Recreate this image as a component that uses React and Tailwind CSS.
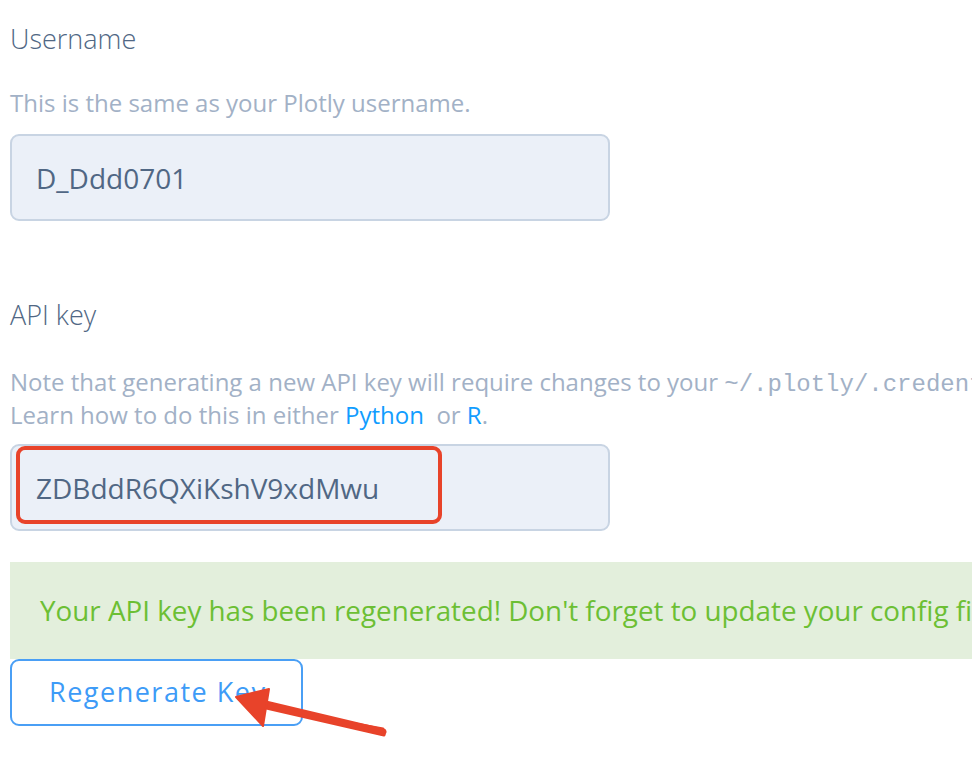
import React from 'react';

export default function App(){
  return (
    <div className="w-[972px] h-[768px] overflow-hidden bg-white relative" style={{ fontFamily: '"Open Sans", sans-serif' }}>
      <div className="w-[1400px] pl-[10px] pt-[21px]">
        <div className="text-[27px] leading-[36px] font-light text-[#506784]">Username</div>
        <div className="mt-[30px] text-[24px] leading-[32px] text-[#a2b1c6]">This is the same as your Plotly username.</div>
        <Field value="D_Ddd0701" className="mt-[15px]" />

        <div className="mt-[76px] text-[27px] leading-[36px] font-light text-[#506784]">API key</div>
        <div className="mt-[32px] text-[24px] leading-[33px] text-[#a2b1c6] whitespace-nowrap">
          <div className="h-[33px]">
            Note that generating a new API key will require changes to your{' '}
            <code className="text-[24px] leading-none" style={{ fontFamily: '"Liberation Mono", monospace' }}>~/.plotly/.credentials</code> file.
          </div>
          <div className="h-[33px]">
            Learn how to do this in either <a className="text-[#119dff]">Python</a>&nbsp; or <a className="text-[#119dff]">R</a>.
          </div>
        </div>
        <div className="relative mt-[13px] w-[600px]">
          <Field value="ZDBddR6QXiKshV9xdMwu" />
          {/* annotation box */}
          <div className="absolute left-[6px] top-[2px] w-[426px] h-[78px] border-[4px] border-[#e8432a] rounded-[9px]" />
        </div>

        <div className="mt-[31px] h-[97px] bg-[#e3efdc] flex items-center pl-[30px] text-[27.8px] text-[#6cbf34] whitespace-nowrap">
          Your API key has been regenerated! Don't forget to update your config files.
        </div>
        <button className="w-[293px] h-[67px] border-2 border-[#4a9ff5] rounded-[9px] text-[27px] text-[#3d9bf7] text-left pl-[37px] tracking-[1.5px]">
          Regenerate Key
        </button>
      </div>

      {/* arrow annotation */}
      <svg className="absolute left-0 top-0" width="972" height="768" viewBox="0 0 972 768">
        <path d="M383 729 L384 735 L262 707 Z" fill="#e8432a" stroke="#e8432a" strokeWidth="3" strokeLinejoin="round" />
        <path d="M383 732 L257 702" stroke="#e8432a" strokeWidth="7" strokeLinecap="round" />
        <path d="M236 697 L269 689 L263 726 Z" fill="#e8432a" stroke="#e8432a" strokeWidth="2" strokeLinejoin="round" />
      </svg>
    </div>
  );
}

function Field({ value, className = '' }){
  return (
    <div className={`w-[600px] h-[87px] bg-[#ebf0f8] border-2 border-[#c8d4e3] rounded-[9px] flex items-center pl-[24px] text-[28px] text-[#506784] ${className}`}>
      {value}
    </div>
  );
}
